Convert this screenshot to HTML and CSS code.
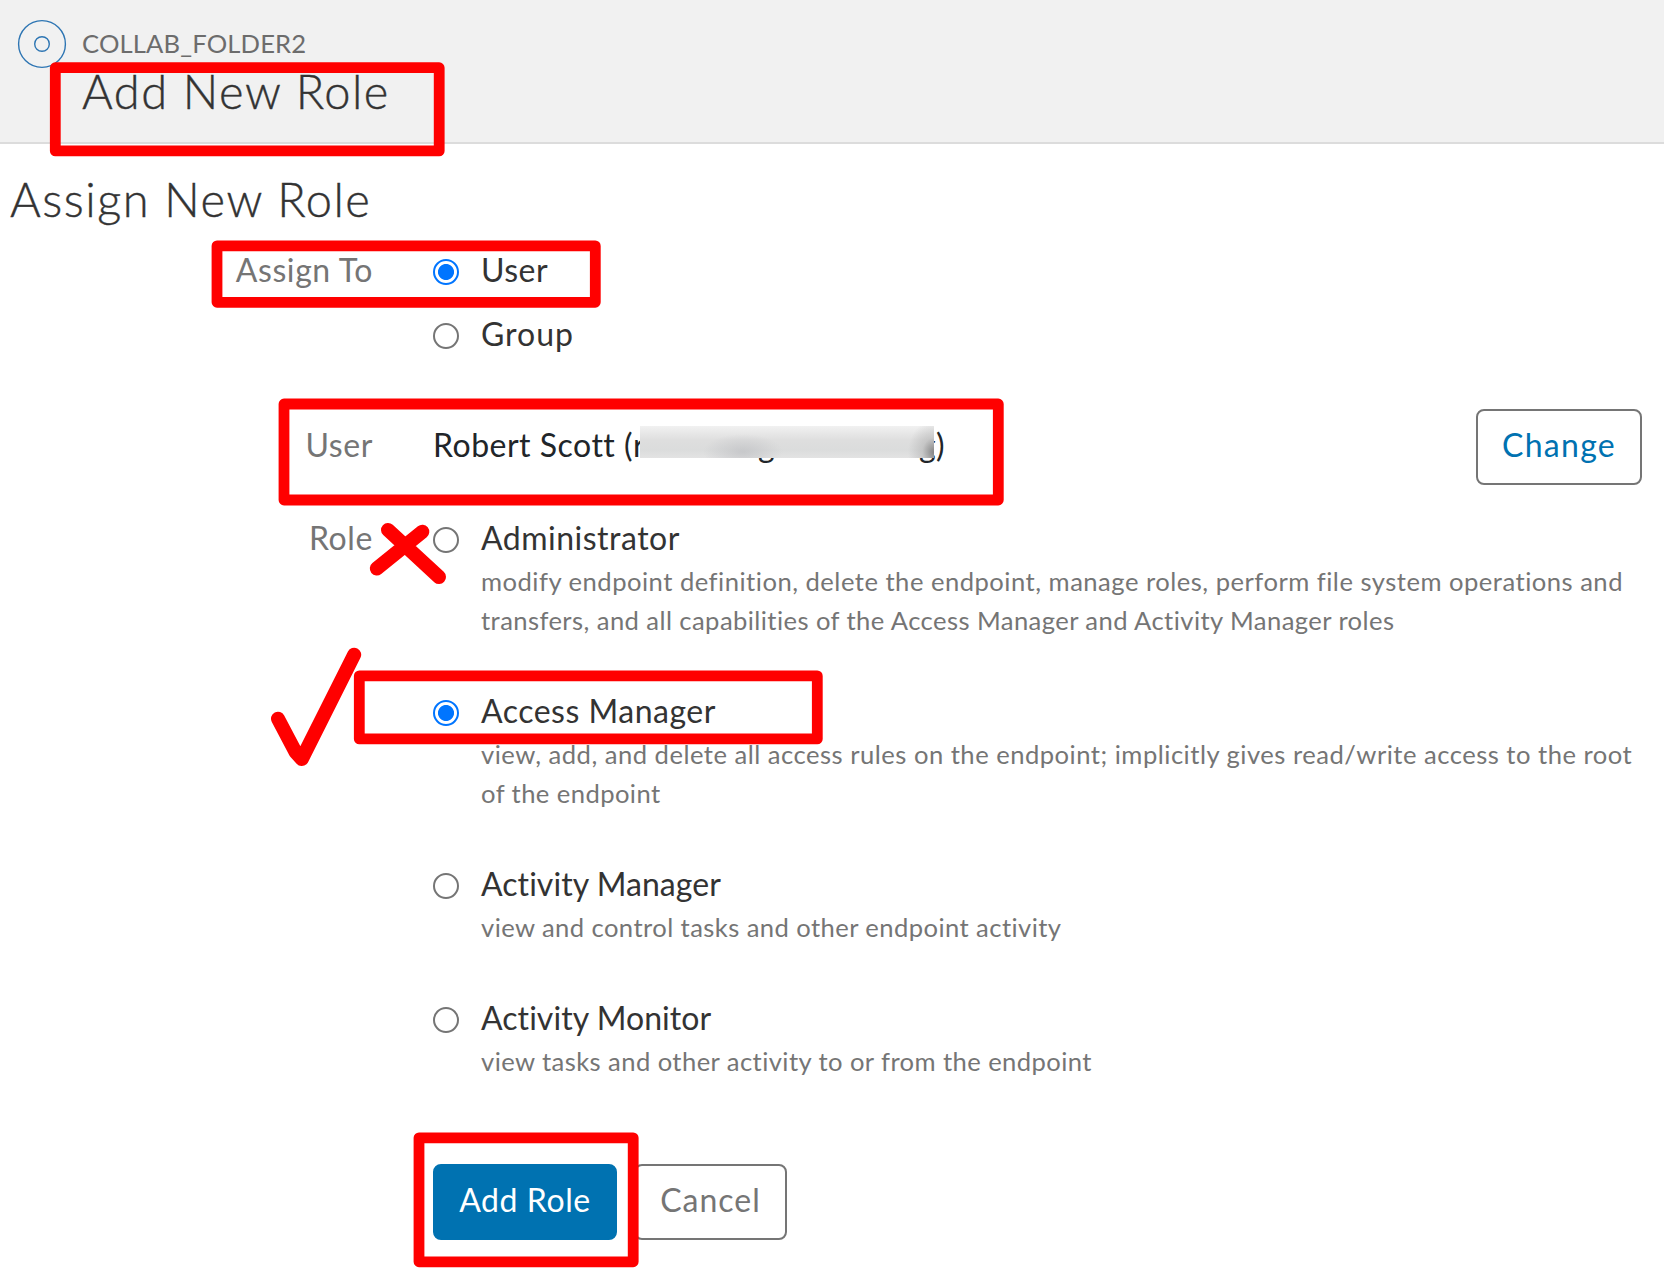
FILE: index.html
```
<!DOCTYPE html>
<html lang="en">
<head>
<meta charset="utf-8">
<title>Add New Role</title>
<link rel="stylesheet" href="styles.css">
</head>
<body>
<header class="page-header">
  <svg class="endpoint-icon" viewBox="0 0 50 50" aria-hidden="true">
    <circle cx="25" cy="25" r="23.4"/>
    <circle cx="25" cy="25" r="7.3"/>
  </svg>
  <div class="heading">
    <div class="crumb">COLLAB_FOLDER2</div>
    <h1 class="title">Add New Role</h1>
  </div>
</header>
<main class="content">
  <h2 class="title section-title">Assign New Role</h2>
  <form class="form">
    <div class="label">Assign To</div>
    <div class="options">
      <label class="option"><input type="radio" name="to" checked><span>User</span></label>
      <label class="option"><input type="radio" name="to"><span class="wide">Group</span></label>
    </div>
    <div class="label user-row">User</div>
    <div class="user-row user-field">
      <div class="user-name"><span>Robert Scott (</span><span class="redacted"><span>r</span><span class="at">@</span><span class="mid">g</span><span class="end">g</span><i class="smudge"></i></span><span>)</span></div>
      <button type="button" class="btn change">Change</button>
    </div>
    <div class="label role-row">Role</div>
    <div class="roles role-row">
      <label class="option"><input type="radio" name="role"><span>Administrator</span>
        <small><span class="long">modify endpoint definition, delete the endpoint, manage roles, perform file system operations and</span><br>transfers, and all capabilities of the Access Manager and Activity Manager roles</small></label>
      <label class="option"><input type="radio" name="role" checked><span>Access Manager</span>
        <small><span class="long">view, add, and delete all access rules on the endpoint; implicitly gives read/write access to the root</span><br>of the endpoint</small></label>
      <label class="option"><input type="radio" name="role"><span class="tight">Activity Manager</span>
        <small>view and control tasks and other endpoint activity</small></label>
      <label class="option"><input type="radio" name="role"><span class="tight">Activity Monitor</span>
        <small>view tasks and other activity to or from the endpoint</small></label>
    </div>
    <div class="actions">
      <button type="button" class="btn primary">Add Role</button>
      <button type="button" class="btn cancel">Cancel</button>
    </div>
  </form>
</main>
<svg class="annotations" viewBox="0 0 1664 1288" aria-hidden="true">
  <g class="boxes">
    <rect x="55.3" y="67.7" width="383.9" height="83.2"/>
    <rect x="217" y="245.9" width="378.3" height="56.4"/>
    <rect x="284" y="404" width="714.3" height="96"/>
    <rect x="359.3" y="675.9" width="458" height="63"/>
    <rect x="419" y="1137.8" width="214.2" height="124"/>
  </g>
  <g class="marks">
    <path d="M388 529.9L439 577M422.3 531.7L376.8 568.5"/>
    <path d="M278 718.7L295.5 752L301.8 759L354.2 654.7"/>
  </g>
</svg>
</body>
</html>
```
FILE: styles.css
```
* { box-sizing: border-box; }
body {
  margin: 0;
  position: relative;
  min-height: 1288px;
  background: #fff;
  color: #333;
  font: 400 32px/48px Lato, "Open Sans", sans-serif;
  font-variant-ligatures: none;
  letter-spacing: .5px;
}
.page-header {
  display: flex;
  gap: 15px;
  height: 144px;
  padding: 19px 17px 0;
  background: #f1f1f1;
  border-bottom: 2px solid #dcdcdc;
}
.endpoint-icon { width: 50px; height: 50px; fill: none; stroke: #2d75b3; stroke-width: 1.4; }
.crumb { margin-top: 5px; font-size: 25.6px; line-height: 38px; letter-spacing: .15px; color: #6c6c6c; }
.title { margin: 0; font-size: 47px; font-weight: 300; line-height: 56px; letter-spacing: 1.5px; -webkit-text-stroke: .4px #333; }
.heading .title { margin-top: 1px; }
.section-title { padding: 27px 10px 0; }
.form { display: grid; grid-template-columns: 373px 1fr; column-gap: 60px; padding: 19px 22px 0 0; }
.label { text-align: right; color: #757575; letter-spacing: .6px; }
.options { display: grid; gap: 16px; }
.option { display: grid; grid-template-columns: 26px 1fr; column-gap: 22px; }
.option input {
  appearance: none;
  width: 26px; height: 26px;
  margin: 13px 0 0;
  border: 2px solid #757575;
  border-radius: 50%;
}
.option input:checked { border-color: #0075ff; background: radial-gradient(circle, #0075ff 7.6px, transparent 8.4px); }
.option .wide { letter-spacing: 1px; }
.option .tight { letter-spacing: .05px; }
.option small { grid-column: 2; font-size: 25.6px; line-height: 38.4px; letter-spacing: .42px; color: #757575; white-space: nowrap; }
.option .long { letter-spacing: .49px; }
.user-row { padding-top: 62.5px; }
.user-field { display: flex; justify-content: space-between; height: 127px; }
.user-name { display: flex; color: #212529; }
.redacted { position: relative; width: 303px; }
.redacted > span { position: absolute; top: 0; left: 0; }
.redacted > .at { left: 96px; font-size: 26px; }
.redacted > .mid { left: 125px; }
.redacted > .end { left: 286px; }
.smudge {
  position: absolute; left: 7px; top: 5.5px; width: 294px; height: 32px;
  background:
    radial-gradient(ellipse 26px 32px at 100% 82%, #858585, rgba(170,170,170,.45) 45%, transparent),
    radial-gradient(ellipse 40px 18px at 103px 26px, rgba(185,186,190,.6), transparent),
    linear-gradient(#f1f1f1, #dedede 45%, #dbdcdc 75%, #e3e3e3);
}
.role-row { padding-top: 29.3px; }
.roles { display: grid; gap: 48px; }
.btn {
  height: 76px;
  padding: 0 0 5px;
  border: 2px solid #757575;
  border-radius: 8px;
  background: #fff;
  color: #757575;
  font: inherit;
  letter-spacing: 1px;
}
.change { width: 166px; margin-top: -11.5px; color: #0072b1; letter-spacing: 1.3px; }
.actions { grid-column: 2; display: flex; gap: 17px; padding-top: 83.3px; }
.primary { width: 184px; background: #0072b1; border-color: #0072b1; color: #fff; letter-spacing: .6px; }
.cancel { width: 153px; }
.annotations { position: absolute; left: 0; top: 0; width: 1664px; height: 1288px; fill: none; stroke: #f00; pointer-events: none; }
.boxes { stroke-width: 10.8; stroke-linejoin: round; }
.marks { stroke-width: 14; stroke-linecap: round; stroke-linejoin: round; }
```
